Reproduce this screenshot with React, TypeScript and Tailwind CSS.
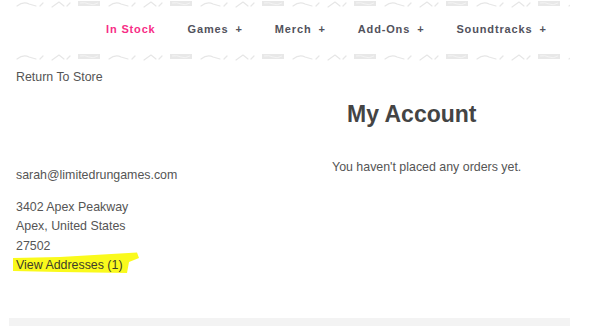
import React from "react";

const UNITS = [0, 1, 2, 3, 4, 5, 6];

function PatternStrip({ vy, h }: { vy: number; h: number }) {
  return (
    <svg width="555" height={h} viewBox={`0 ${vy} 555 ${h}`} className="block">
      {UNITS.map((i) => (
        <g key={i} transform={`translate(${i * 92} 0)`}>
          <g fill="none" stroke="#e6e6e6" strokeWidth="1.2" strokeLinecap="round" strokeLinejoin="round">
            <path d="M2 8 C6 5 10 4 14 6 L21 8" />
            <path d="M25 8 L28 5" />
            <path d="M37 9 L44 4 L49 8" />
            <path d="M52 8 L55 5" />
          </g>
          <rect x="63" y="3" width="22" height="5" fill="#e8e8e8" />
          <path d="M65 5 Q70 4 74 6 T83 5" fill="none" stroke="#f6f6f6" strokeWidth="0.8" />
        </g>
      ))}
    </svg>
  );
}

function NavItem({ label, plus, active }: { label: string; plus?: boolean; active?: boolean }) {
  return (
    <span className={`flex items-center font-bold text-[11px] tracking-[0.85px] ${active ? "text-[#f72d86]" : "text-[#52525c]"}`}>
      <span>{label}</span>
      {plus && <span className="ml-[7px]">+</span>}
    </span>
  );
}

export default function App() {
  return (
    <div className="w-[593px] h-[326px] bg-white overflow-hidden flex flex-col font-['Liberation_Sans',Arial,sans-serif] text-[12.4px] text-[#555]">
      <div className="h-[8px] pl-[15px] overflow-hidden">
        <PatternStrip vy={2} h={8} />
      </div>
      <nav className="h-[43px] flex items-center pl-[106px] gap-[32px]">
        <NavItem label="In Stock" active />
        <NavItem label="Games" plus />
        <NavItem label="Merch" plus />
        <NavItem label="Add-Ons" plus />
        <NavItem label="Soundtracks" plus />
      </nav>
      <div className="h-[12px] pl-[15px]">
        <PatternStrip vy={0} h={12} />
      </div>
      <div className="pl-[16px] pt-[5px] leading-[19px]">Return To Store</div>
      <div className="grid grid-cols-[316px_1fr] pl-[16px]">
        <div className="flex flex-col pt-[78.5px]">
          <div className="leading-[19px]">sarah@limitedrungames.com</div>
          <div className="mt-[13px] leading-[19.5px]">
            <div>3402 Apex Peakway</div>
            <div>Apex, United States</div>
            <div>27502</div>
            <div className="relative w-fit">
              <svg width="132" height="26" viewBox="0 0 132 26" className="absolute left-[-5px] top-[-5px]">
                <path d="M2 7 L49 6 L126 1.5 L128 7 L118 11 L116 22 L49 21 L2 20 Z" fill="#fafa1c" />
              </svg>
              <span className="relative text-[#3d3d2a]">View Addresses (1)</span>
            </div>
          </div>
        </div>
        <div className="flex flex-col">
          <h1 className="mt-[12.5px] pl-[15px] text-[23px] font-bold leading-[28px] text-[#444]">My Account</h1>
          <p className="mt-[30.5px] leading-[19px]">You haven't placed any orders yet.</p>
        </div>
      </div>
      <div className="mt-auto ml-[9px] w-[561px] h-[8px] bg-[#f3f3f3]" />
    </div>
  );
}
